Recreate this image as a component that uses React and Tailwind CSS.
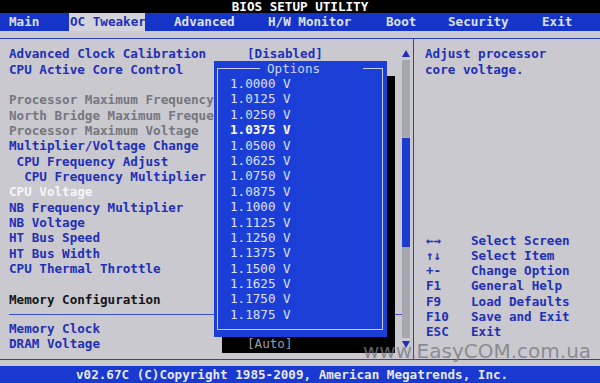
const BLUE = 'text-[#1f30b6]';
const GREY = 'text-[#76767e]';

const rows = [
  { t: 'Advanced Clock Calibration', c: BLUE, v: '[Disabled]' },
  { t: 'CPU Active Core Control', c: BLUE },
  { t: '' },
  { t: 'Processor Maximum Frequency', c: GREY },
  { t: 'North Bridge Maximum Freque', c: GREY },
  { t: 'Processor Maximum Voltage', c: GREY },
  { t: 'Multiplier/Voltage Change', c: BLUE },
  { t: ' CPU Frequency Adjust', c: BLUE },
  { t: '  CPU Frequency Multiplier', c: BLUE },
  { t: 'CPU Voltage', c: 'text-[#f7f7fb]' },
  { t: 'NB Frequency Multiplier', c: BLUE },
  { t: 'NB Voltage', c: BLUE },
  { t: 'HT Bus Speed', c: BLUE },
  { t: 'HT Bus Width', c: BLUE },
  { t: 'CPU Thermal Throttle', c: BLUE },
  { t: '' },
  { t: 'Memory Configuration', c: 'text-[#151518]' },
];

const rows2 = [
  { t: 'Memory Clock', c: BLUE },
  { t: 'DRAM Voltage', c: BLUE, v: '[Auto]', shadow: true },
];

const options = [
  '1.0000 V', '1.0125 V', '1.0250 V', '1.0375 V', '1.0500 V', '1.0625 V', '1.0750 V', '1.0875 V',
  '1.1000 V', '1.1125 V', '1.1250 V', '1.1375 V', '1.1500 V', '1.1625 V', '1.1750 V', '1.1875 V',
];

const help = [
  ['←→', 'Select Screen'],
  ['↑↓', 'Select Item'],
  ['+-', 'Change Option'],
  ['F1', 'General Help'],
  ['F9', 'Load Defaults'],
  ['F10', 'Save and Exit'],
  ['ESC', 'Exit'],
];

function Row({ r }) {
  return (
    <div className="flex h-[15.35px] leading-[15.35px] whitespace-pre">
      <div className="w-[247px] pl-[9px]">
        <div className={r.c || ''}>{r.t}</div>
      </div>
      {r.v && (
        <div className={r.shadow ? 'relative z-20 font-normal text-[#9c9cae]' : BLUE}>{r.v}</div>
      )}
    </div>
  );
}

function Tri({ down }) {
  return (
    <svg width="8" height="7" viewBox="0 0 8 7">
      <polygon points={down ? '0,0 8,0 4,7' : '4,0 8,7 0,7'} fill="#1f30b6" />
    </svg>
  );
}

export default function App() {
  return (
    <div className="relative w-[600px] h-[383px] overflow-hidden bg-[#c9c9cf] font-['DejaVu_Sans_Mono',monospace] text-[12.6px] font-bold whitespace-pre">
      {/* title */}
      <div className="h-[13px] bg-black text-center leading-[13px] text-white">BIOS SETUP UTILITY</div>

      {/* tabs */}
      <div className="flex h-[18px] bg-[#1634c8] pl-[9px] leading-[18px] text-[#dde1f4]">
        <div className="w-[60px] shrink-0">Main</div>
        <div className="w-[105px] shrink-0">
          <div className="h-full w-[76px] bg-[#d3d3dc] pl-[1px] text-[#1f30b6]">OC Tweaker</div>
        </div>
        <div className="w-[94px] shrink-0">Advanced</div>
        <div className="w-[118px] shrink-0">H/W Monitor</div>
        <div className="w-[62px] shrink-0">Boot</div>
        <div className="w-[94px] shrink-0">Security</div>
        <div>Exit</div>
      </div>

      <div className="h-[7px]" />
      <div className="h-px bg-[#2c42b6]" />

      {/* main */}
      <div className="flex h-[320px]">
        <div className="flex w-[413px] shrink-0">
          <div className="flex w-[402px] flex-col pt-[7.3px]">
            {rows.map((r, i) => (
              <Row key={i} r={r} />
            ))}
            <div className="flex h-[14px] items-center pl-[9px]">
              <div className="h-px w-full bg-[#3a50bc]" />
            </div>
            {rows2.map((r, i) => (
              <Row key={i} r={r} />
            ))}
          </div>
          <div className="flex w-[8px] flex-col pt-[8px]">
            <div className="flex h-[13px] items-center justify-center">
              <Tri />
            </div>
            <div className="flex h-[278px] flex-col">
              <div className="h-[78px] bg-[#a7a7b0]" />
              <div className="h-[109px] bg-[#1c3cd0]" />
              <div className="flex-1 bg-[#a7a7b0]" />
            </div>
            <div className="flex h-[13px] items-center justify-center">
              <Tri down />
            </div>
          </div>
        </div>
        <div className="w-px bg-[#2c42b6]" />
        <div className={`flex-1 pl-[11px] pt-[7.3px] ${BLUE}`}>
          <div className="h-[15.35px] leading-[15.35px]">Adjust processor</div>
          <div className="h-[15.35px] leading-[15.35px]">core voltage.</div>
          <div className="mt-[156px]">
            {help.map(([k, v]) => (
              <div key={k} className="flex h-[15.15px] leading-[15.15px]">
                <div className="w-[46px] pl-px">{k}</div>
                <div>{v}</div>
              </div>
            ))}
          </div>
        </div>
      </div>

      <div className="h-px bg-[#2c42b6]" />
      <div className="h-[6px]" />

      {/* footer */}
      <div className="h-[17px] bg-[#1a39d0] pl-[76px] leading-[17px] text-[#e6e8f6]">
        v02.67C (C)Copyright 1985-2009, American Megatrends, Inc.
      </div>

      {/* popup shadow */}
      <div className="absolute left-[222px] top-[76px] z-[5] h-[277px] w-[173px] bg-black" />

      {/* popup */}
      <div className="absolute left-[214px] top-[61px] z-10 flex h-[276px] w-[173px] flex-col bg-[#1b3fd6] pb-[7px] pl-[3px] pr-[4px] pt-[7px]">
        <div className="flex-1 border border-[#c6cef6]">
          <div className="-mt-[8px] ml-[42px] h-[15px] w-[103px] bg-[#1b3fd6] pl-[7px] leading-[15px] font-normal text-[#cdd5fa]">
            Options
          </div>
          <div className="pl-[12px]">
            {options.map((o) => (
              <div
                key={o}
                className={`h-[15.4px] leading-[15.4px] ${o === '1.0375 V' ? 'font-bold text-white' : 'font-normal text-[#dbe1ff]'}`}
              >
                {o}
              </div>
            ))}
          </div>
        </div>
      </div>

      {/* watermark */}
      <div className="absolute left-[363px] top-[341px] z-30 font-['DejaVu_Sans',sans-serif] text-[20px] font-normal leading-[20px] text-[#7a7a82]/80">
        www.EasyCOM.com.ua
      </div>
    </div>
  );
}
